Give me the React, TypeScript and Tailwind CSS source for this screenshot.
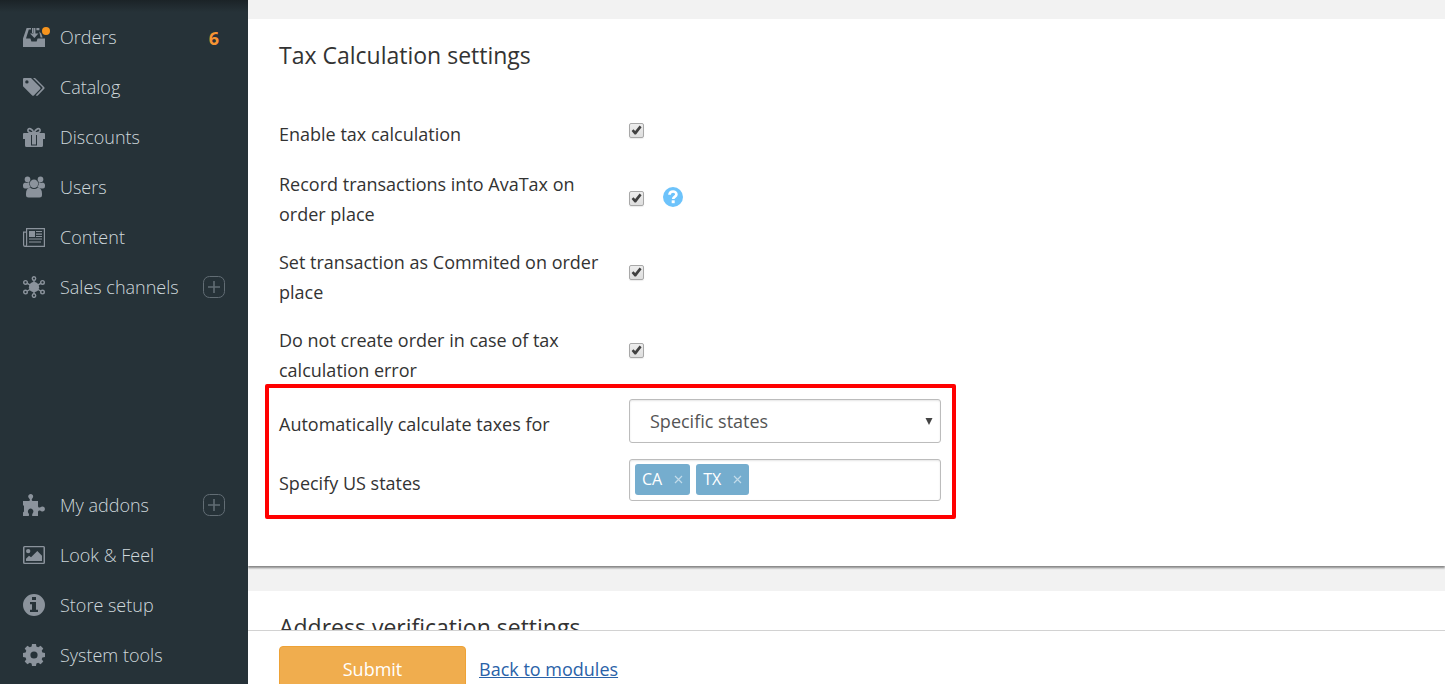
import { useState, type ReactNode } from "react";

function Icon({ children }: { children: ReactNode }) {
  return (
    <svg viewBox="0 0 22 22" width="22" height="22" fill="currentColor" aria-hidden="true" className="shrink-0 text-[#8b939c]">
      {children}
    </svg>
  );
}

const OrdersIcon = () => (
  <svg viewBox="0 0 28 22" width="28" height="22" fill="currentColor" aria-hidden="true" className="-mr-1.5 shrink-0 text-[#8b939c]">
    <path d="M3.6 2H8V3.6H5.8L3 12.6H7.4L8.4 15.6H13.6L14.6 12.6H22V21H0V12.6Z" />
    <path d="M9 2H10V7H9ZM10.4 2H12.4V7.4H15.4L11.4 12L7 7.4H10.4ZM13.4 2H16.4V4.2H13.4ZM16.2 5.6L18.2 7.6L19.6 11.6H17.6Z" />
    <circle cx="23" cy="5" r="4" fill="#f7941d" />
  </svg>
);

const CatalogIcon = () => (
  <Icon>
    <path fillRule="evenodd" d="M1 2H8L17.2 11.3Q18 12.2 17.2 13L10.8 19.5Q10 20.2 9.2 19.5L0 10.2V3Q0 2 1 2ZM3.9 4.2A1.7 1.7 0 1 0 3.9 7.6A1.7 1.7 0 1 0 3.9 4.2Z" />
    <path d="M10 2H12L21.3 11.2Q22 12 21.3 12.8L14.8 19.4Q13.8 20.2 12.8 19.2L19.3 12.6Q19.9 12 19.3 11.3Z" />
  </Icon>
);

const GiftIcon = () => (
  <Icon>
    <path d="M1 7H21Q22 7 22 8V13H20V19.5Q20 21 18.5 21H3.5Q2 21 2 19.5V13H0V8Q0 7 1 7Z" />
    <path d="M8 9H9V19H8ZM13 9H14V19H13ZM8 18.6H14V19.4H8Z" fill="#263238" />
    <path fill="none" stroke="currentColor" strokeWidth="1.7" d="M10.8 6.9C9.6 2.4 5.4 1.5 4.9 4.2C4.7 6 6.5 6.9 10.8 6.9ZM11.2 6.9C12.4 2.4 16.6 1.5 17.1 4.2C17.3 6 15.5 6.9 11.2 6.9Z" />
  </Icon>
);

const UsersIcon = () => (
  <Icon>
    <circle cx="4.5" cy="3.4" r="2.8" />
    <circle cx="17.5" cy="3.4" r="2.8" />
    <path d="M2.1 6.4Q4.2 7.6 6.3 6.1Q5.8 9 7.7 11Q6 12.4 4.2 12.4H2Q0 12.4 0 10.2V8.7Q0 7 2.1 6.4ZM19.9 6.4Q17.8 7.6 15.7 6.1Q16.2 9 14.3 11Q16 12.4 17.8 12.4H20Q22 12.4 22 10.2V8.7Q22 7 19.9 6.4Z" />
    <circle cx="11" cy="7.8" r="4.2" />
    <path d="M7 11.6Q11 14.6 15 11.6Q19 12.5 19 17.5V19Q19 21.5 16.5 21.5H5.5Q3 21.5 3 19V17.5Q3 12.5 7 11.6Z" />
  </Icon>
);

const ContentIcon = () => (
  <Icon>
    <path fillRule="evenodd" d="M3 2H22V21H2Q0 21 0 19V5.5H3ZM4.2 3.2V18.8Q4.2 19.5 3.8 19.8H20.8V3.2ZM1.2 6.7V18.8Q1.2 19.8 2.1 19.8Q3 19.8 3 18.8V6.7Z" />
    <path d="M6 5H12V11H6ZM13 5H19V6H13ZM13 7.5H19V8.7H13ZM13 10H19V11H13ZM6 12.5H19V13.5H6ZM6 15.5H18V16.6H6Z" />
  </Icon>
);

const ChannelsIcon = () => (
  <Icon>
    <circle cx="11" cy="11.2" r="5.1" />
    <g fill="none" stroke="currentColor" strokeWidth="1.4">
      <path d="M11 4.2V18M4.3 7.4L17.7 15M17.7 7.4L4.3 15" />
      <ellipse cx="11" cy="2.5" rx="1.7" ry="1.8" />
      <ellipse cx="11" cy="19.6" rx="1.7" ry="1.8" />
      <circle cx="2.5" cy="6.4" r="1.8" />
      <circle cx="19.5" cy="6.4" r="1.8" />
      <circle cx="2.5" cy="16.1" r="1.8" />
      <circle cx="19.5" cy="16.1" r="1.8" />
    </g>
  </Icon>
);

const AddonsIcon = () => (
  <Icon>
    <path d="M0 7H5.6Q7.2 7 6.9 5.6L5.7 3.7Q4.7 2.4 5.7 1.1Q7.7-1.1 9.7 1.1Q10.6 2.4 9.7 3.7L8.7 5.6Q8.6 7 10 7H15V12Q15 14 17 13.5L18.3 12.8Q20 12 21.3 13.3Q22.5 15 21.3 16.8Q20 18 18.3 17.3L17 16.5Q15 16 15 18V22H9.3Q8.8 20.7 9.7 19.3Q11.2 17.2 9.6 15.4Q7.6 13.7 5.7 15.4Q4.2 17.2 5.5 19.3Q6.5 20.8 5.7 22H0V18.4L1 17.5V12L0 11Z" />
  </Icon>
);

const PictureIcon = () => (
  <Icon>
    <path fillRule="evenodd" d="M1.5 2H20.5Q22 2 22 3.5V18.5Q22 20 20.5 20H1.5Q0 20 0 18.5V3.5Q0 2 1.5 2ZM1.5 3.3V18.7H20.5V3.3Z" />
    <circle cx="5.2" cy="7.1" r="2.2" />
    <path d="M3 17V14.7L6 11.8L8 13.3L14.3 7L19 11.7V17Z" />
  </Icon>
);

const InfoIcon = () => (
  <Icon>
    <path fillRule="evenodd" d="M11 0A11 11 0 1 0 11 22A11 11 0 1 0 11 0ZM9 3H13V6H9ZM7 8H13V15.7H15V18H7V15.7H9V10.3H7Z" />
  </Icon>
);

const GearIcon = () => (
  <Icon>
    <path fillRule="evenodd" d="M9 0H13L13.4 2.6L15.2 3.3L17.6 1.7L20.3 4.4L18.7 6.8L19.4 8.6L22 9V13L19.4 13.4L18.7 15.2L20.3 17.6L17.6 20.3L15.2 18.7L13.4 19.4L13 22H9L8.6 19.4L6.8 18.7L4.4 20.3L1.7 17.6L3.3 15.2L2.6 13.4L0 13V9L2.6 8.6L3.3 6.8L1.7 4.4L4.4 1.7L6.8 3.3L8.6 2.6ZM11 7.4A3.6 3.6 0 1 0 11 14.6A3.6 3.6 0 1 0 11 7.4Z" />
  </Icon>
);

type Item = { label: string; icon: ReactNode; count?: number; expandable?: boolean };

const topItems: Item[] = [
  { label: "Orders", icon: <OrdersIcon />, count: 6 },
  { label: "Catalog", icon: <CatalogIcon /> },
  { label: "Discounts", icon: <GiftIcon /> },
  { label: "Users", icon: <UsersIcon /> },
  { label: "Content", icon: <ContentIcon /> },
  { label: "Sales channels", icon: <ChannelsIcon />, expandable: true },
];

const bottomItems: Item[] = [
  { label: "My addons", icon: <AddonsIcon />, expandable: true },
  { label: "Look & Feel", icon: <PictureIcon /> },
  { label: "Store setup", icon: <InfoIcon /> },
  { label: "System tools", icon: <GearIcon /> },
];

function MenuList({ items }: { items: Item[] }) {
  return (
    <ul>
      {items.map((item) => (
        <li key={item.label} className="flex h-[50px] items-center justify-between px-[23px]">
          <a href="#" className="flex items-center gap-[15px] font-light text-[#cfd8dc]">
            {item.icon}
            {item.label}
          </a>
          {item.count !== undefined && <span className="pt-0.5 pr-1.5 font-bold text-[#f79433]">{item.count}</span>}
          {item.expandable && (
            <button type="button" aria-label={`Add to ${item.label}`} className="text-[#626d74]">
              <svg viewBox="0 0 22 22" width="22" height="22" fill="none" stroke="currentColor" aria-hidden="true">
                <rect x="0.5" y="0.5" width="21" height="21" rx="6" />
                <path d="M11 5V17M5 11H17" strokeWidth="1.6" />
              </svg>
            </button>
          )}
        </li>
      ))}
    </ul>
  );
}

function CheckBox({ id }: { id: string }) {
  const [checked, setChecked] = useState(true);
  return (
    <span className="grid size-[15px]">
      <input
        id={id}
        type="checkbox"
        checked={checked}
        onChange={(e) => setChecked(e.target.checked)}
        className="col-start-1 row-start-1 size-[15px] appearance-none rounded-[2px] border border-[#a8a8a8] bg-linear-to-b from-[#ededed] to-[#dedede] shadow-[0_1px_1px_rgba(0,0,0,0.08)]"
      />
      {checked && (
        <svg viewBox="0 0 15 15" width="15" height="15" aria-hidden="true" className="pointer-events-none col-start-1 row-start-1">
          <path d="M2.6 8L4.4 6.3L6.2 8L10.6 2.6L12.6 4.2L7 11.4H5.6Z" fill="#404040" />
        </svg>
      )}
    </span>
  );
}

function StateTag({ name, onRemove }: { name: string; onRemove: () => void }) {
  return (
    <span className="flex h-[31px] items-center gap-3 rounded-[3px] bg-[#75adce] px-[7px] text-base text-white">
      <span className="pb-0.5">{name}</span>
      <button type="button" aria-label={`Remove ${name}`} onClick={onRemove} className="text-[#c2dbea]">
        <svg viewBox="0 0 9 9" width="9" height="9" stroke="currentColor" strokeWidth="1.2" aria-hidden="true">
          <path d="M1 1L8 8M8 1L1 8" />
        </svg>
      </button>
    </span>
  );
}

const row = "grid grid-cols-[350px_1fr]";
const labelText = "max-w-[320px] justify-self-start";
const field = "w-[312px] rounded-[3px] border border-[#bcbcbc] bg-white shadow-[inset_0_1px_2px_rgba(0,0,0,0.1)]";

export default function App() {
  const [states, setStates] = useState(["CA", "TX"]);
  return (
    <div className="flex h-screen overflow-hidden bg-[#f2f2f2] font-['Open_Sans',sans-serif] text-lg leading-[30px] text-[#333]">
      <nav className="flex w-[248px] shrink-0 flex-col justify-between bg-[#263238] bg-linear-to-b from-[#1b2327] to-[#263238] to-[12px] pt-3 pb-1">
        <MenuList items={topItems} />
        <MenuList items={bottomItems} />
      </nav>

      <div className="flex min-w-0 flex-1 flex-col">
        <main className="flex min-h-0 flex-1 flex-col gap-[25px] overflow-hidden pt-[19px]">
          <section className="shrink-0 bg-white px-[31px] pt-[21px] pb-[65px] shadow-[0_2px_2px_rgba(0,0,0,0.45)]">
            <h2 className="text-[23px] leading-[30px]">Tax Calculation settings</h2>

            <div className="mt-[49px] flex flex-col gap-[18px]">
              <div className={`${row} pb-0.5`}>
                <label htmlFor="enable" className={labelText}>Enable tax calculation</label>
                <div className="pt-1"><CheckBox id="enable" /></div>
              </div>
              <div className={row}>
                <label htmlFor="record" className={labelText}>Record transactions into AvaTax on order place</label>
                <div className="flex items-start gap-[19px] pt-[18px]">
                  <div className="pt-1"><CheckBox id="record" /></div>
                  <button type="button" aria-label="Help">
                    <svg viewBox="0 0 20 20" width="20" height="20" aria-hidden="true">
                      <circle cx="10" cy="10" r="10" fill="#6dc3fb" />
                      <path d="M6.5 7.8C6.6 3.5 13.5 3.5 13.4 7.4C13.4 9.6 10.2 9.5 10.2 12.1" fill="none" stroke="#fff" strokeWidth="2.7" />
                      <path d="M8.7 13.3H11.7V16.2H8.7Z" fill="#fff" />
                    </svg>
                  </button>
                </div>
              </div>
              <div className={row}>
                <label htmlFor="commit" className={labelText}>Set transaction as Commited on order place</label>
                <div className="pt-[18px]"><CheckBox id="commit" /></div>
              </div>
              <div className={row}>
                <label htmlFor="error" className={labelText}>Do not create order in case of tax calculation error</label>
                <div className="pt-[18px]"><CheckBox id="error" /></div>
              </div>
            </div>

            <div className="relative flex w-fit flex-col gap-4 pt-3.5">
              <div className={row}>
                <label htmlFor="scope" className={`${labelText} pt-2.5`}>Automatically calculate taxes for</label>
                <div className="grid items-center">
                  <select id="scope" defaultValue="specific" className={`${field} col-start-1 row-start-1 h-11 appearance-none px-5 text-[#555]`}>
                    <option value="specific">Specific states</option>
                    <option value="all">All states</option>
                  </select>
                  <svg viewBox="0 0 8 8" width="8" height="8" aria-hidden="true" className="pointer-events-none col-start-1 row-start-1 mr-2 justify-self-end">
                    <path d="M0.5 1H7.5L4 8Z" fill="#444" />
                  </svg>
                </div>
              </div>
              <div className={row}>
                <label htmlFor="states" className={`${labelText} pt-[9px]`}>Specify US states</label>
                <div className={`${field} flex h-[42px] items-start gap-1.5 px-[5px] pt-1`}>
                  {states.map((s) => (
                    <StateTag key={s} name={s} onRemove={() => setStates(states.filter((x) => x !== s))} />
                  ))}
                  <input id="states" type="text" className="min-w-0 flex-1 outline-none" />
                </div>
              </div>
              <div className="pointer-events-none absolute -top-px -right-[15px] -bottom-[18px] -left-3.5 rounded-[2px] border-4 border-[#ff0000]" />
            </div>
          </section>

          <section className="shrink-0 bg-white px-[31px] pt-[21px] pb-10">
            <h2 className="text-[23px] leading-[30px]">Address verification settings</h2>
          </section>
        </main>

        <footer className="flex h-[54px] shrink-0 items-start gap-[13px] overflow-hidden border-t border-[#d2d2d2] bg-white px-[31px] pt-[15px]">
          <button type="submit" className="h-[46px] w-[187px] shrink-0 rounded-[4px] border border-[#eea236] bg-[#f0ad4e] text-white">
            Submit
          </button>
          <a href="#" className="pt-2 text-[#2a62a8] underline">Back to modules</a>
        </footer>
      </div>
    </div>
  );
}
